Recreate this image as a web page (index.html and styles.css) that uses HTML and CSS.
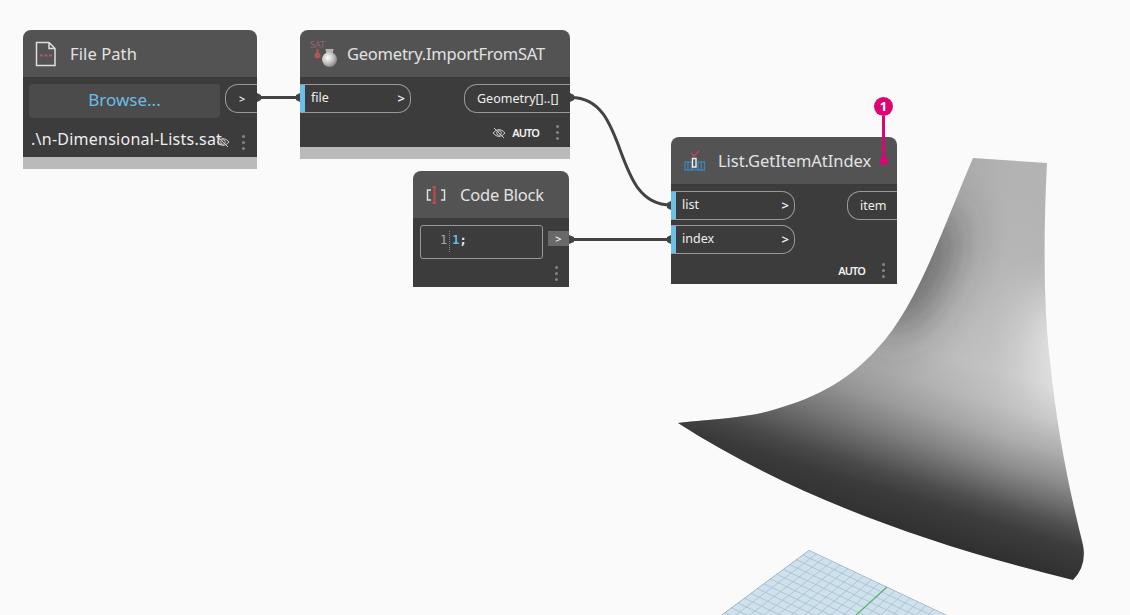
FILE: index.html
```
<!DOCTYPE html>
<html lang="en">
<head>
<meta charset="utf-8">
<title>Node graph</title>
<link rel="stylesheet" href="styles.css">
</head>
<body>
<main class="canvas">
  <svg class="scene" viewBox="0 0 1130 615">
    <defs>
      <linearGradient id="shade" gradientUnits="userSpaceOnUse" x1="1085" y1="209" x2="982" y2="553">
        <stop offset="0" stop-color="#b3b3b3"/><stop offset=".19" stop-color="#b6b6b6"/>
        <stop offset=".37" stop-color="#c0c0c0"/><stop offset=".5" stop-color="#c7c7c7"/>
        <stop offset=".59" stop-color="#c0c0c0"/><stop offset=".67" stop-color="#adadad"/>
        <stop offset=".75" stop-color="#8c8c8c"/><stop offset=".81" stop-color="#6c6c6c"/>
        <stop offset=".86" stop-color="#505050"/><stop offset=".91" stop-color="#3d3d3d"/>
        <stop offset="1" stop-color="#303030"/>
      </linearGradient>
      <linearGradient id="side" gradientUnits="userSpaceOnUse" x1="680" y1="0" x2="1010" y2="0">
        <stop offset="0" stop-color="#333" stop-opacity=".42"/><stop offset="1" stop-color="#333" stop-opacity="0"/>
      </linearGradient>
      <filter id="soft" x="-150%" y="-100%" width="400%" height="300%"><feGaussianBlur stdDeviation="24"/></filter>
      <clipPath id="surface"><path d="M973 158L1047 163C1043 240 1044 315 1050 362C1057 431 1070 493 1083 545Q1087 566 1073 580C925 544 790 495 678 423C710 419 747 418 773 410C822 396 850 378 876 350C917 307 940 235 973 158Z"/></clipPath>
      <clipPath id="ground"><path d="M809 550L949 616H720Z"/></clipPath>
    </defs>
    <g clip-path="url(#surface)">
      <rect x="670" y="150" width="420" height="440" fill="url(#shade)"/>
      <rect x="670" y="150" width="420" height="440" fill="url(#side)"/>
      <ellipse cx="915" cy="272" rx="24" ry="70" transform="rotate(27 915 272)" fill="#333" opacity=".68" filter="url(#soft)"/>
      <ellipse cx="1062" cy="355" rx="26" ry="65" transform="rotate(-6 1062 355)" fill="#fff" opacity=".7" filter="url(#soft)"/>
    </g>
    <g clip-path="url(#ground)" fill="none">
      <path fill="#cfe1ed" d="M809 550L949 616H720Z"/>
      <path stroke="#a6bfce" stroke-width=".8" d="M816.8 553.7L734.3 616M824.6 557.4L748.7 616M832.4 561.1L762.7 616M840.2 564.8L776.6 616M848 568.5L790.1 616M855.8 572.2L803.5 616M863.6 575.9L816.6 616M871.4 579.6L829.6 616M879.2 583.3L842.3 616M894.8 590.7L867.3 616M902.6 594.4L879.6 616M910.4 598.1L891.6 616M918.2 601.8L903.6 616M926 605.5L915.4 616M933.8 609.2L927 616"/>
      <path stroke="#a6bfce" stroke-width=".8" d="M802.5 554.8l141 66M796 559.6l141 66M789.5 564.4l141 66M783 569.2l141 66M776.5 574l141 66M770 578.8l141 66M763.5 583.6l141 66M757 588.4l141 66M750.5 593.2l141 66M744 598l141 66M737.5 602.8l141 66M731 607.6l141 66M724.5 612.4l141 66"/>
      <path stroke="#8fa9b8" stroke-width="1.2" d="M720 616L809 550L949 616"/>
      <path stroke="#57b06a" stroke-width="1.2" d="M887 587L855 616"/>
    </g>
    <g class="wire">
      <path d="M258 97.500H300M571 97.500C631 97.500 610 205 671 205M571 239.500H671"/>
      <path class="wire-end" d="M257 93l4 2v5l-4 2zM300 93l-4 2v5l4 2zM570 93l4 2v5l-4 2zM671 201l-4 2v5l4 2zM569 235l5 2v5l-5 2zM671 235l-4 2v5l4 2z"/>
    </g>
  </svg>

  <section class="node node-path">
    <header class="head">
      <svg class="icon" width="22" height="26" viewBox="0 0 22 26" fill="none"><path d="M1.500 1.500H14L20 7.500V24.500H1.500ZM14 1.500V7.500H20" stroke="#dedede" stroke-width="1.500"/><path d="M5 14.500H17" stroke="#a95a63" stroke-width="2" stroke-dasharray="3 1.500"/></svg>
      <h2 class="title">File Path</h2>
    </header>
    <div class="body">
      <div class="row"><button class="browse">Browse...</button><span class="port out chevron-out"><i class="chev">&gt;</i></span></div>
      <div class="path-row"><span class="filename">.\n-Dimensional-Lists.sat</span>
        <svg class="eye" width="14" height="12" viewBox="0 0 14 12"><path d="M1 6Q7-1 13 6Q7 13 1 6ZM2 1L12 11"/><circle cx="7" cy="6" r="2.300"/></svg>
        <span class="dots"><i></i><i></i><i></i></span></div>
    </div>
    <div class="strip"></div>
  </section>

  <section class="node node-import">
    <header class="head">
      <svg class="icon" width="30" height="30" viewBox="0 0 30 30"><defs><radialGradient id="ball" cx=".38" cy=".38" r=".65"><stop stop-color="#fff"/><stop offset=".55" stop-color="#c5c5c5"/><stop offset="1" stop-color="#858585"/></radialGradient></defs><text class="sat" x="1" y="9">SAT</text><path d="M8.500 10V15" stroke="#a94f51" stroke-width="2.500"/><circle cx="8.500" cy="16.500" r="3" fill="#ad5655"/><path d="M16.500 10h8l-1 5h-6z" fill="#b5b5b5"/><circle cx="20.500" cy="20.500" r="7.500" fill="url(#ball)"/></svg>
      <h2 class="title">Geometry.ImportFromSAT</h2>
    </header>
    <div class="body">
      <div class="row"><span class="port in"><b class="label">file</b><i class="chev">&gt;</i></span><span class="port out"><b class="label">Geometry[]..[]</b></span></div>
      <div class="foot">
        <svg class="eye" width="14" height="12" viewBox="0 0 14 12"><path d="M1 6Q7-1 13 6Q7 13 1 6ZM2 1L12 11"/><circle cx="7" cy="6" r="2.300"/></svg>
        <span class="auto">AUTO</span><span class="dots"><i></i><i></i><i></i></span></div>
    </div>
    <div class="strip"></div>
  </section>

  <section class="node node-code">
    <header class="head">
      <svg class="icon" width="20" height="18" viewBox="0 0 20 18" fill="none"><path d="M5 4H1.500V14H5M15 4H18.500V14H15" stroke="#dedede" stroke-width="1.500"/><path d="M10 1H6.500M8.500 1V17M10 17H6.500" stroke="#c34a4a" stroke-width="2"/></svg>
      <h2 class="title">Code Block</h2>
    </header>
    <div class="body">
      <div class="row"><div class="editor"><span class="line-no">1</span><code class="code"><span class="num">1</span>;</code></div><span class="code-out"><i class="chev">&gt;</i></span></div>
      <div class="foot"><span class="dots"><i></i><i></i><i></i></span></div>
    </div>
  </section>

  <section class="node node-list">
    <header class="head">
      <svg class="icon" width="22" height="22" viewBox="0 0 22 22" fill="none"><path d="M1 12H7.500V20H1ZM4 12V20M14 12H20.500V20H14ZM17.300 12V20M7 19.500H14" stroke="#3f83b5" stroke-width="1.300"/><path d="M8.500 8.500H12V17H8.500Z" stroke="#f0f0f0" stroke-width="1.400"/><path d="M7 3L10 6L15 1" stroke="#a64b5c" stroke-width="1.700"/></svg>
      <h2 class="title">List.GetItemAtIndex</h2>
    </header>
    <div class="body">
      <div class="row"><span class="port in"><b class="label">list</b><i class="chev">&gt;</i></span><span class="port out"><b class="label">item</b></span></div>
      <div class="row second"><span class="port in"><b class="label">index</b><i class="chev">&gt;</i></span></div>
      <div class="foot"><span class="auto">AUTO</span><span class="dots"><i></i><i></i><i></i></span></div>
    </div>
  </section>

  <div class="marker"><span class="badge">1</span><span class="stem"></span></div>
</main>
</body>
</html>
```
FILE: styles.css
```
* { box-sizing: border-box; }
body { margin: 0; background: #fafafa; font-family: "Noto Sans", sans-serif; }
i, b { font-style: normal; font-weight: 400; }
.canvas { position: relative; width: 1130px; height: 615px; overflow: hidden; background: #fafafa; }
.scene { display: block; width: 1130px; height: 615px; }
.wire { fill: none; stroke: #434343; stroke-width: 3; }
.wire .wire-end { fill: #434343; stroke: none; }

/* Nodes sit freely on the canvas */
.node { position: absolute; border-radius: 8px 8px 0 0; overflow: hidden; display: flex; flex-direction: column; }
.node-path { left: 23px; top: 30px; width: 234px; height: 139px; }
.node-import { left: 300px; top: 30px; width: 270px; height: 129px; }
.node-code { left: 413px; top: 171px; width: 156px; height: 116px; }
.node-list { left: 671px; top: 137px; width: 226px; height: 147px; }

.head { height: 47px; flex: none; display: flex; align-items: center; background: #535353; }
.icon { flex: none; display: block; }
.title { margin: 0; font-size: 16.5px; font-weight: 400; line-height: 24px; color: #e2e2e2; white-space: nowrap; }
.node-path .head { padding-left: 12px; gap: 13px; }
.node-import .head { padding-left: 9px; gap: 8px; }
.node-code .head { padding-left: 13px; gap: 14px; }
.node-list .head { padding-left: 13px; gap: 12px; }
.node-path .title { letter-spacing: .1px; }
.node-import .title { letter-spacing: -.23px; }
.node-code .title { letter-spacing: -.2px; }
.node-list .title { letter-spacing: -.05px; }
.sat { font: 9px "Noto Sans", sans-serif; fill: #99646a; }

.body { flex: 1; min-height: 0; background: #3c3c3c; padding-top: 7px; }
.strip { height: 12px; flex: none; background: #bababa; }
.row { display: flex; justify-content: space-between; height: 29px; }
.second { margin-top: 5px; }
.port { height: 29px; display: flex; align-items: center; border: 1px solid #999; color: #eee; }
.in { width: 111px; justify-content: space-between; border-left: 0; border-radius: 0 13px 13px 0; padding: 0 5px 2px 11px; background: linear-gradient(#6ac0e7, #6ac0e7) left / 5px 100% no-repeat; }
.in .chev { margin-top: 1px; }
.node-list .in { width: 124px; }
.out { border-right: 0; border-radius: 13px 0 0 13px; padding-left: 12px; }
.node-import .out { width: 106px; }
.node-list .out { width: 50px; }
.chevron-out { width: 32px; padding-left: 13px; }
.label { font-size: 12.5px; line-height: 18px; white-space: nowrap; }
.chev { font-size: 13px; line-height: 16px; font-weight: 600; }
.chevron-out .chev, .code-out .chev { font-size: 11px; }

.browse { margin: 0 0 0 6px; padding: 0 0 3px; width: 191px; height: 34px; border: 0; border-radius: 4px; background: #4b4b4b; color: #6cbde6; font: 17px/24px "Noto Sans", sans-serif; }
.path-row { display: flex; align-items: center; height: 30px; margin-top: 11px; padding-left: 8px; }
.filename { width: 185px; flex: none; color: #eee; font-size: 16px; letter-spacing: .25px; line-height: 24px; white-space: nowrap; }
.path-row .dots { margin: 6px 0 0 12px; }
.path-row .eye { margin-top: 6px; }
.eye { flex: none; fill: none; stroke: #c8c8c8; stroke-width: 1; }
.dots { display: flex; flex-direction: column; gap: 3px; width: 3px; }
.dots i { width: 3px; height: 3px; border-radius: 50%; background: #848484; }
.foot { display: flex; align-items: center; justify-content: flex-end; height: 32px; padding: 1px 12px 0 0; }
.node-import .foot { height: 32px; padding: 7px 11px 0 0; }
.auto { margin: 0 17px 0 6px; color: #f0f0f0; font-size: 11px; font-weight: 600; letter-spacing: -.9px; line-height: 14px; }

.editor { display: flex; align-items: flex-start; width: 123px; height: 34px; margin-left: 7px; padding: 5px 0 0 19px; border: 1px solid #999; border-radius: 3px; font: 12px/18px "DejaVu Sans Mono", monospace; }
.line-no { height: 21px; padding-right: 2px; border-right: 1px dotted #888; color: #aaa; }
.code { padding-left: 2px; font: inherit; font-weight: 700; color: #e8e8e8; }
.num { color: #65b7df; }
.code-out { display: flex; align-items: center; justify-content: center; width: 21px; height: 15px; margin-top: 6px; background: #696969; color: #eee; }
.node-code .foot { padding: 0 11px 0 0; height: 38px; }

/* Numbered callout over the list node */
.marker { position: absolute; left: 874px; top: 97px; width: 19px; display: flex; flex-direction: column; align-items: center; }
.badge { width: 19px; height: 19px; border-radius: 50%; background: #dc0573; color: #fff; font-size: 13px; font-weight: 700; line-height: 19px; text-align: center; }
.stem { width: 3px; height: 44px; background: #dc0573; }
.marker::after { content: ""; width: 8px; height: 8px; margin-top: -3px; border-radius: 50%; background: #dc0573; }
```
